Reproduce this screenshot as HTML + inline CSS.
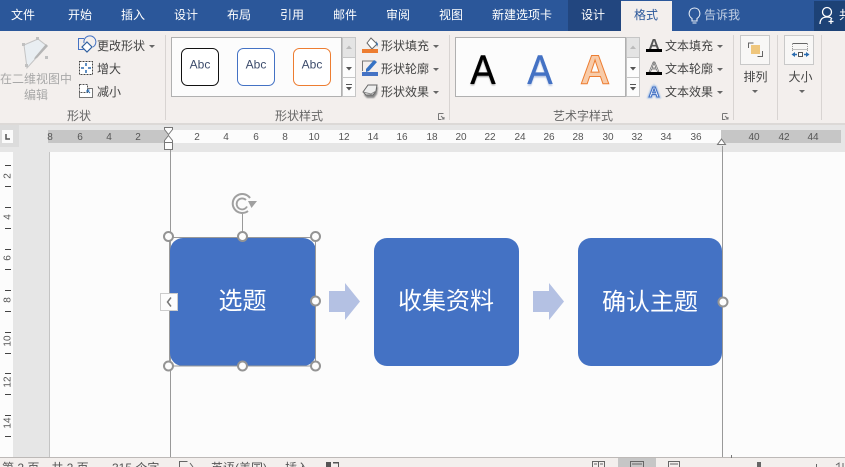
<!DOCTYPE html>
<html lang="zh"><head><meta charset="utf-8"><title>Word</title>
<style>
html,body{margin:0;padding:0;width:845px;height:467px;overflow:hidden;background:#fcfcfc}
svg{display:block;font-family:"Liberation Sans","Noto Sans CJK SC",sans-serif}
.t{font-size:12px;fill:#fff;text-anchor:middle}
.r{font-size:12px;fill:#444}
.c{font-size:12px;fill:#444;text-anchor:middle}
.g{font-size:12px;fill:#666;text-anchor:middle}
.d{font-size:12px;fill:#a8a8a8;text-anchor:middle}
.n{font-size:10px;fill:#555;text-anchor:middle}
.s{font-size:12px;fill:#555}
.h{fill:#fdfdfd;stroke:#949494;stroke-width:2}
.w{font-size:24px;fill:#fff;text-anchor:middle}
.A{font-size:41px;text-anchor:middle;font-family:"Liberation Sans",sans-serif}
</style></head><body>
<svg width="845" height="467" viewBox="0 0 845 467" xmlns="http://www.w3.org/2000/svg">
<defs>
<filter id="b" x="-30%" y="-30%" width="160%" height="160%"><feGaussianBlur stdDeviation="0.9"/></filter>
</defs>
<rect width="845" height="467" fill="#fcfcfc"/>
<!-- title tabs -->
<rect width="845" height="31" fill="#2b579a"/>
<rect x="568" y="0" width="53" height="31" fill="#22467f"/>
<rect x="621" y="1" width="51" height="30" fill="#f3efed"/>
<rect x="814" y="1" width="31" height="30" fill="#1d4276"/>
<text class="t" x="23" y="19">文件</text><text class="t" x="80" y="19">开始</text><text class="t" x="133" y="19">插入</text><text class="t" x="186" y="19">设计</text><text class="t" x="239" y="19">布局</text><text class="t" x="292" y="19">引用</text><text class="t" x="345" y="19">邮件</text><text class="t" x="398" y="19">审阅</text><text class="t" x="451" y="19">视图</text><text class="t" x="522" y="19">新建选项卡</text><text class="t" x="593" y="19">设计</text>
<text class="t" x="646" y="19" style="fill:#2b579a">格式</text>
<text class="t" x="722" y="19" style="fill:#c3d0e4">告诉我</text>
<path d="M692 21v-2.500c-5-3-3-10.500 2.500-10.500s7.500 7.500 2.500 10.500V21zM692.500 23h4" fill="none" stroke="#e6ecf5" stroke-width="1.100"/>
<circle cx="827" cy="12" r="4.500" fill="none" stroke="#fff" stroke-width="1.300"/>
<path d="M820 24c0-5 3-7 7-7s4 1 5 2M831 19v5M828.500 21.500h5" fill="none" stroke="#fff" stroke-width="1.300"/>
<text class="t" x="845" y="19">共</text>
<!-- ribbon -->
<rect y="31" width="845" height="93" fill="#f3efed"/>
<rect y="123" width="845" height="2" fill="#dcd9d7"/>
<g stroke="#d8d4d2" stroke-width="1"><path d="M165.500 35v85M449.500 35v85M733.500 35v85M777.500 35v85M821.500 35v85"/></g>
<!-- edit shape icon -->
<path d="M24 45l14-6 9 7-20 22z" fill="#e9eef2" stroke="#c4c4c4" stroke-width="1"/>
<g fill="#c0c0c0"><rect x="22" y="43" width="3" height="3"/><rect x="36" y="37" width="3" height="3"/><rect x="45" y="56" width="3" height="3"/><rect x="25" y="64" width="3" height="3"/></g>
<path d="M35 57l11-13 2 2-11 12-3 1z" fill="#b5b5b5"/>
<text class="d" x="36" y="83">在二维视图中</text>
<text class="d" x="36" y="99">编辑</text>
<!-- small commands -->
<path d="M84 38.500h-5.500v11h5" fill="none" stroke="#4472c4" stroke-width="1"/>
<path d="M84 43a6 6 0 1 1 9 4" fill="none" stroke="#4472c4" stroke-width="1"/>
<path d="M87 42l5 5-5 5-5-5z" fill="#fff" stroke="#2f5f9f" stroke-width="1.200"/>
<text class="r" x="97" y="50">更改形状</text>
<path d="M149 45h6l-3 3z" fill="#666"/>
<rect x="79.500" y="61.500" width="13" height="13" fill="#fff" stroke="#444" stroke-dasharray="2 1"/>
<path d="M86 63v3M86 70v3M81 68h3M88 68h3" stroke="#2b6cb0" stroke-width="1.500"/>
<text class="r" x="97" y="73">增大</text>
<path d="M86.500 88.500h6v9h-13v-5" fill="#fff" stroke="#777"/>
<rect x="79.500" y="84.500" width="8" height="8" fill="#fff" stroke="#555" stroke-dasharray="2 1"/>
<path d="M87 90l3 3M87 90h2.500M87 90v2.500" stroke="#2b6cb0" fill="none"/>
<text class="r" x="97" y="96">减小</text>
<text class="g" x="79" y="120">形状</text>
<!-- shape gallery -->
<rect x="171.500" y="37.500" width="170" height="59" fill="#fcfcfc" stroke="#b0b0b0"/>
<rect x="181.500" y="48.500" width="37" height="37" rx="6" fill="#fff" stroke="#111"/>
<rect x="237.500" y="48.500" width="37" height="37" rx="6" fill="#fff" stroke="#4472c4"/>
<rect x="293.500" y="48.500" width="37" height="37" rx="6" fill="#fff" stroke="#ed7d31"/>
<g font-size="12" fill="#3d4c6c" text-anchor="middle"><text x="200" y="68.500">Abc</text><text x="256" y="68.500">Abc</text><text x="312" y="68.500">Abc</text></g>
<rect x="342.500" y="37.500" width="13" height="20" fill="#e4e4e4" stroke="#c6c6c6"/>
<rect x="342.500" y="57.500" width="13" height="20" fill="#fcfcfc" stroke="#c6c6c6"/>
<rect x="342.500" y="77.500" width="13" height="19" fill="#fcfcfc" stroke="#c6c6c6"/>
<path d="M346 49h6l-3-3.500z" fill="#bbb"/><path d="M346 67h6l-3 3.500z" fill="#555"/>
<path d="M346 84.500h6" stroke="#555"/><path d="M346 87h6l-3 3.500z" fill="#555"/>
<!-- shape fill etc -->
<path d="M367 43l4-5 6 6-5 5z" fill="#fff" stroke="#666"/><path d="M376 41l2 3-1 3z" fill="#2b6cb0"/>
<rect x="362" y="49" width="16" height="4" fill="#ed7d31"/>
<text class="r" x="381" y="50">形状填充</text>
<path d="M362.500 71v-10h13" fill="none" stroke="#777"/>
<path d="M366 69l8-9 3 2-8 9-3 1z" fill="#3572c4"/>
<rect x="362" y="72" width="16" height="4" fill="#4472c4"/>
<text class="r" x="381" y="73">形状轮廓</text>
<path d="M364 95l5-8h9l-1 7-3 4h-7z" fill="#888" filter="url(#b)"/>
<path d="M363 92l5-7h9l-1 6-3 4h-7z" fill="#eee" stroke="#666"/><path d="M363 92l8 2 5-3" fill="none" stroke="#888"/>
<text class="r" x="381" y="96">形状效果</text>
<g fill="#666"><path d="M433 45h6l-3 3z"/><path d="M433 68h6l-3 3z"/><path d="M433 91h6l-3 3z"/></g>
<text class="g" x="299" y="120">形状样式</text>
<path d="M438.500 113.500h5M438.500 113.500v6h3M441 116l3 3M444 117v2h-2" fill="none" stroke="#777"/>
<!-- WordArt gallery -->
<rect x="455.500" y="37.500" width="170" height="59" fill="#fcfcfc" stroke="#b0b0b0"/>
<g transform="translate(483 85) scale(.92 1)"><text class="A" fill="#666" filter="url(#b)" opacity=".6">A</text></g>
<g transform="translate(483 83.500) scale(.92 1)"><text class="A" fill="#000" stroke="#000" stroke-width=".4">A</text></g>
<g transform="translate(540 85.500) scale(.92 1)"><text class="A" fill="#8ea6d4" filter="url(#b)" opacity=".6">A</text></g>
<g transform="translate(540 83.500) scale(.92 1)"><text class="A" fill="#4472c4" stroke="#4472c4" stroke-width=".4">A</text></g>
<text class="A" x="595" y="83.500" font-weight="bold" fill="#f8cba8" stroke="#ed7d31" stroke-width="1">A</text>
<rect x="626.500" y="37.500" width="13" height="20" fill="#e4e4e4" stroke="#c6c6c6"/>
<rect x="626.500" y="57.500" width="13" height="20" fill="#fcfcfc" stroke="#c6c6c6"/>
<rect x="626.500" y="77.500" width="13" height="19" fill="#fcfcfc" stroke="#c6c6c6"/>
<path d="M630 49h6l-3-3.500z" fill="#bbb"/><path d="M630 67h6l-3 3.500z" fill="#555"/>
<path d="M630 84.500h6" stroke="#555"/><path d="M630 87h6l-3 3.500z" fill="#555"/>
<!-- text fill etc -->
<g font-family="Liberation Sans" font-size="15" text-anchor="middle">
<text x="654" y="49" font-weight="bold" fill="#555">A</text>
<text x="654" y="72" fill="#fff" stroke="#666" stroke-width=".7">A</text>
<text x="654" y="97" font-weight="bold" fill="none" stroke="#a9c4e8" stroke-width="3" filter="url(#b)">A</text>
<text x="654" y="97" font-weight="bold" fill="#fff" stroke="#4472c4" stroke-width="1.100">A</text>
</g>
<rect x="646" y="49" width="16" height="3" fill="#000"/>
<rect x="646" y="72" width="16" height="3" fill="#000"/>
<text class="r" x="665" y="50">文本填充</text>
<text class="r" x="665" y="73">文本轮廓</text>
<text class="r" x="665" y="96">文本效果</text>
<g fill="#666"><path d="M717 45h6l-3 3z"/><path d="M717 68h6l-3 3z"/><path d="M717 91h6l-3 3z"/></g>
<text class="g" x="583" y="120">艺术字样式</text>
<path d="M722.500 113.500h5M722.500 113.500v6h3M725 116l3 3M728 117v2h-2" fill="none" stroke="#777"/>
<!-- arrange / size -->
<rect x="740.500" y="35.500" width="29" height="29" fill="#f8f7f6" stroke="#c9c9c9"/>
<rect x="751" y="45" width="9" height="9" fill="#efc67c"/>
<path d="M748.500 48v-5h5M762.500 51v5.500h-5" fill="none" stroke="#666"/>
<text class="c" x="755.500" y="81">排列</text>
<path d="M752 90h6l-3 3z" fill="#666"/>
<rect x="784.500" y="35.500" width="29" height="29" fill="#f8f7f6" stroke="#c9c9c9"/>
<path d="M792.500 43.500h15" stroke="#666"/><path d="M792.500 44v8M807.500 44v8" stroke="#999" stroke-dasharray="1 1"/><path d="M792.500 49.500h15" stroke="#888" stroke-dasharray="1 1"/>
<rect x="798.500" y="52.500" width="4" height="4" fill="#fff" stroke="#555"/>
<path d="M793 54.500h4M804 54.500h4" stroke="#2b6cb0" stroke-width="1.500"/><path d="M795 52l-3.500 2.500 3.500 2.500zM806 52l3.500 2.500-3.500 2.500z" fill="#2b6cb0"/>
<text class="c" x="800.500" y="81">大小</text>
<path d="M799 90h6l-3 3z" fill="#666"/>
<!-- horizontal ruler -->
<rect y="125" width="845" height="27" fill="#e6e6e6"/>
<rect x="0" y="125" width="19" height="22" fill="#dcdcdc"/>
<rect x="2" y="130" width="11" height="13" fill="#fbfbfb"/>
<path d="M6 134v5h4" fill="none" stroke="#555" stroke-width="1.500"/>
<rect x="48" y="130" width="120" height="13" fill="#c6c6c6"/>
<rect x="168" y="130" width="553" height="13" fill="#fcfcfc"/>
<rect x="721" y="130" width="120" height="13" fill="#c6c6c6"/>
<text class="n" x="50" y="140">8</text><text class="n" x="80" y="140">6</text><text class="n" x="109" y="140">4</text><text class="n" x="138" y="140">2</text>
<text class="n" x="197" y="140">2</text><text class="n" x="226" y="140">4</text><text class="n" x="256" y="140">6</text><text class="n" x="285" y="140">8</text><text class="n" x="314" y="140">10</text><text class="n" x="344" y="140">12</text><text class="n" x="373" y="140">14</text><text class="n" x="402" y="140">16</text><text class="n" x="432" y="140">18</text><text class="n" x="461" y="140">20</text><text class="n" x="490" y="140">22</text><text class="n" x="520" y="140">24</text><text class="n" x="549" y="140">26</text><text class="n" x="578" y="140">28</text><text class="n" x="608" y="140">30</text><text class="n" x="637" y="140">32</text><text class="n" x="666" y="140">34</text><text class="n" x="696" y="140">36</text><text class="n" x="754" y="140">40</text><text class="n" x="784" y="140">42</text><text class="n" x="813" y="140">44</text>
<path d="M164.500 127.500h8v2l-4 5-4-5z" fill="#fdfdfd" stroke="#777"/>
<path d="M168.500 135.500l4 5v2h-8v-2z" fill="#fdfdfd" stroke="#777"/>
<rect x="164.500" y="142.500" width="8" height="7" fill="#fdfdfd" stroke="#777"/>
<path d="M721.500 139l4 5.500h-8z" fill="#fdfdfd" stroke="#777"/>
<!-- doc area -->
<rect x="0" y="152" width="13" height="306" fill="#fcfcfc"/>
<rect x="13" y="152" width="36" height="306" fill="#e6e6e6"/>
<rect x="49" y="152" width="1" height="306" fill="#c4c4c4"/>
<rect x="50" y="152" width="795" height="306" fill="#fcfcfc"/>
<!-- vertical ruler -->
<path stroke="#444" stroke-width="1" d="M5 165.500h6M5 186.500h6M5 207.500h6M5 228.500h6M5 249.500h6M5 269.500h6M5 290.500h6M5 311.500h6M5 332.500h6M5 353.500h6M5 373.500h6M5 394.500h6M5 415.500h6M5 436.500h6"/>
<g font-size="10" fill="#555" text-anchor="middle">
<text transform="translate(10.500 176) rotate(-90)">2</text><text transform="translate(10.500 217) rotate(-90)">4</text><text transform="translate(10.500 258) rotate(-90)">6</text><text transform="translate(10.500 300) rotate(-90)">8</text><text transform="translate(10.500 341) rotate(-90)">10</text><text transform="translate(10.500 382) rotate(-90)">12</text><text transform="translate(10.500 423) rotate(-90)">14</text>
</g>
<!-- margin lines -->
<path d="M170.500 150v308M722.500 146v312" stroke="#999" stroke-width="1"/>
<!-- shapes -->
<rect x="170" y="238" width="146" height="128" rx="13" fill="#4472c4"/>
<rect x="374" y="238" width="145" height="128" rx="13" fill="#4472c4"/>
<rect x="578" y="238" width="144" height="128" rx="13" fill="#4472c4"/>
<path d="M329 291h16v-8l15 18.500-15 18.500v-8h-16z" fill="#b4c1e3"/>
<path d="M533 291h16v-8l15 18.500-15 18.500v-8h-16z" fill="#b4c1e3"/>
<text class="w" x="242.500" y="309">选题</text>
<text class="w" x="446" y="309">收集资料</text>
<text class="w" x="650" y="310">确认主题</text>
<!-- selection -->
<rect x="169.500" y="237.500" width="146" height="128.500" fill="none" stroke="#999" stroke-width="1"/>
<path d="M242.500 214v18" stroke="#999"/>
<path d="M250 198A9.500 9.500 0 1 0 248 211" fill="none" stroke="#a0a0a0" stroke-width="2"/>
<path d="M246 200A5.500 5.500 0 1 0 247 206.500" fill="none" stroke="#a0a0a0" stroke-width="1.800"/>
<path d="M248 201h9l-5.500 7z" fill="#a0a0a0"/>
<rect x="160.500" y="293.500" width="17" height="17" fill="#fdfdfd" stroke="#ccc"/>
<path d="M171 297.500l-3.500 4.500 3.500 4.500" fill="none" stroke="#777" stroke-width="1.500"/>
<circle class="h" cx="168.500" cy="236.500" r="4.500"/><circle class="h" cx="242.500" cy="236.500" r="4.500"/><circle class="h" cx="315.500" cy="236.500" r="4.500"/>
<circle class="h" cx="315.500" cy="301" r="4.500"/>
<circle class="h" cx="168.500" cy="366" r="4.500"/><circle class="h" cx="242.500" cy="366" r="4.500"/><circle class="h" cx="315.500" cy="366" r="4.500"/>
<circle class="h" cx="723" cy="302" r="4.500"/>
<!-- status bar -->
<rect y="458" width="845" height="9" fill="#f3efed"/>
<rect y="457" width="845" height="1" fill="#bdb9b7"/>
<text class="s" x="2" y="472">第 2 页，共 2 页</text>
<text class="s" x="112" y="472">315 个字</text>
<path d="M179.500 467v-5.500h8M190 463l3 4" fill="none" stroke="#666"/>
<text class="s" x="211" y="472">英语(美国)</text>
<text class="s" x="285" y="472">插入</text>
<rect x="326" y="462" width="5" height="5" fill="#555"/><rect x="333" y="462" width="6" height="1.500" fill="#555"/><rect x="338" y="462" width="1" height="5" fill="#555"/>
<rect x="618" y="458" width="38" height="9" fill="#c6c6c6"/>
<path d="M592.500 467v-5.500h12V467M598.500 461.500V467M594 464h3M600 464h3" fill="none" stroke="#666"/>
<path d="M630.500 467v-5.500h13V467M632 464h10" fill="none" stroke="#666"/>
<path d="M668.500 467v-5.500h11V467M670 464h8" fill="none" stroke="#666"/>
<path d="M731.500 455v3" stroke="#777"/>
<rect x="757" y="462" width="4" height="5" fill="#666"/>
<rect x="816" y="464" width="1" height="3" fill="#666"/>
<path d="M836 465l3-2v4M843 463v4" fill="none" stroke="#666"/>
</svg>
</body></html>
